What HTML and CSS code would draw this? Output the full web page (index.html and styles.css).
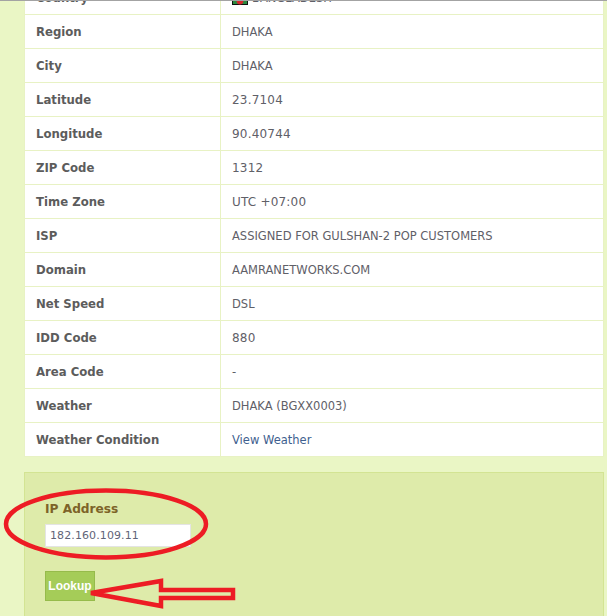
FILE: index.html
```
<!DOCTYPE html>
<html lang="en">
<head>
<meta charset="utf-8">
<title>IP Lookup</title>
<link rel="stylesheet" href="styles.css">
</head>
<body>
<div class="viewport">
  <main class="content">
    <table class="info">
      <tr><th>Country</th><td><svg class="flag" width="16" height="11" viewBox="0 0 16 11"><rect x="0.5" y="0.5" width="15" height="10" fill="#2b8a3e" stroke="#111"/><circle cx="8" cy="7" r="3.4" fill="#d8282f"/></svg>BANGLADESH</td></tr>
      <tr><th>Region</th><td>DHAKA</td></tr>
      <tr><th>City</th><td>DHAKA</td></tr>
      <tr><th>Latitude</th><td class="num">23.7104</td></tr>
      <tr><th>Longitude</th><td class="num">90.40744</td></tr>
      <tr><th>ZIP Code</th><td class="num">1312</td></tr>
      <tr><th>Time Zone</th><td class="num">UTC +07:00</td></tr>
      <tr><th>ISP</th><td>ASSIGNED FOR GULSHAN-2 POP CUSTOMERS</td></tr>
      <tr><th>Domain</th><td>AAMRANETWORKS.COM</td></tr>
      <tr><th>Net Speed</th><td>DSL</td></tr>
      <tr><th>IDD Code</th><td class="num">880</td></tr>
      <tr><th>Area Code</th><td>-</td></tr>
      <tr><th>Weather</th><td>DHAKA (BGXX0003)</td></tr>
      <tr><th>Weather Condition</th><td><a class="link" href="#">View Weather</a></td></tr>
    </table>
    <form class="lookup">
      <label class="lookup-label" for="ip">IP Address</label>
      <input class="lookup-input" id="ip" type="text" value="182.160.109.11">
      <button class="lookup-button" type="button">Lookup</button>
    </form>
  </main>
  <svg class="annotation" width="607" height="616" viewBox="0 0 607 616">
    <ellipse cx="106" cy="524" rx="100" ry="33.5" fill="none" stroke="#ed1c24" stroke-width="4.5"/>
    <path d="M91 593 L161 581 V590 H233 V598 H161 V606 Z" fill="none" stroke="#ed1c24" stroke-width="4.5" stroke-linejoin="miter"/>
  </svg>
</div>
</body>
</html>
```
FILE: styles.css
```
html, body {
  margin: 0;
  padding: 0;
}

body {
  background: #eaf6c5;
  font-family: "DejaVu Sans", Verdana, sans-serif;
  font-size: 12px;
  color: #5f5f5f;
}

.viewport {
  position: relative;
  height: 615px;
  overflow: hidden;
  border-top: 1px solid #a3a3a3;
}

.content {
  margin: -21px 3px 0 24px;
}

.info {
  width: 100%;
  table-layout: fixed;
  border-collapse: collapse;
  background: #fff;
}

.info tr {
  height: 34px;
}

.info th,
.info td {
  padding: 0 11px;
  border: 1px solid #e8f2c4;
  text-align: left;
  vertical-align: middle;
  line-height: 16px;
}

.info th {
  width: 173px;
  font-size: 11.7px;
  font-weight: bold;
  color: #5c5c5c;
}

.info td {
  font-size: 11.5px;
  color: #5f6068;
}

.info .num {
  font-size: 12px;
  letter-spacing: 0.2px;
}

.flag {
  vertical-align: -3px;
  margin-right: 4px;
}

.link {
  color: #3f5f8f;
  text-decoration: none;
}

.lookup {
  display: flex;
  flex-direction: column;
  align-items: flex-start;
  margin-top: 15px;
  padding: 21px 20px 30px;
  height: 160px;
  background: #deebaa;
  border: 1px solid #d3e493;
}

.lookup-label {
  font-size: 12.2px;
  font-weight: bold;
  line-height: 30px;
  color: #7d6328;
}

.lookup-input {
  box-sizing: border-box;
  width: 146px;
  height: 23px;
  margin: 0;
  padding: 0 4px;
  border: 1px solid #e4e4e4;
  background: #fff;
  font-family: inherit;
  font-size: 11px;
  letter-spacing: 0.1px;
  color: #5f6478;
}

.lookup-button {
  box-sizing: border-box;
  width: 50px;
  height: 30px;
  margin-top: 24px;
  padding: 0;
  border: 1px solid #96bb4b;
  background: #a5cc58;
  color: #fff;
  font-family: "Liberation Sans", Arial, sans-serif;
  font-size: 12px;
  font-weight: bold;
}

.annotation {
  position: absolute;
  top: -1px;
  left: 0;
  pointer-events: none;
}
```
